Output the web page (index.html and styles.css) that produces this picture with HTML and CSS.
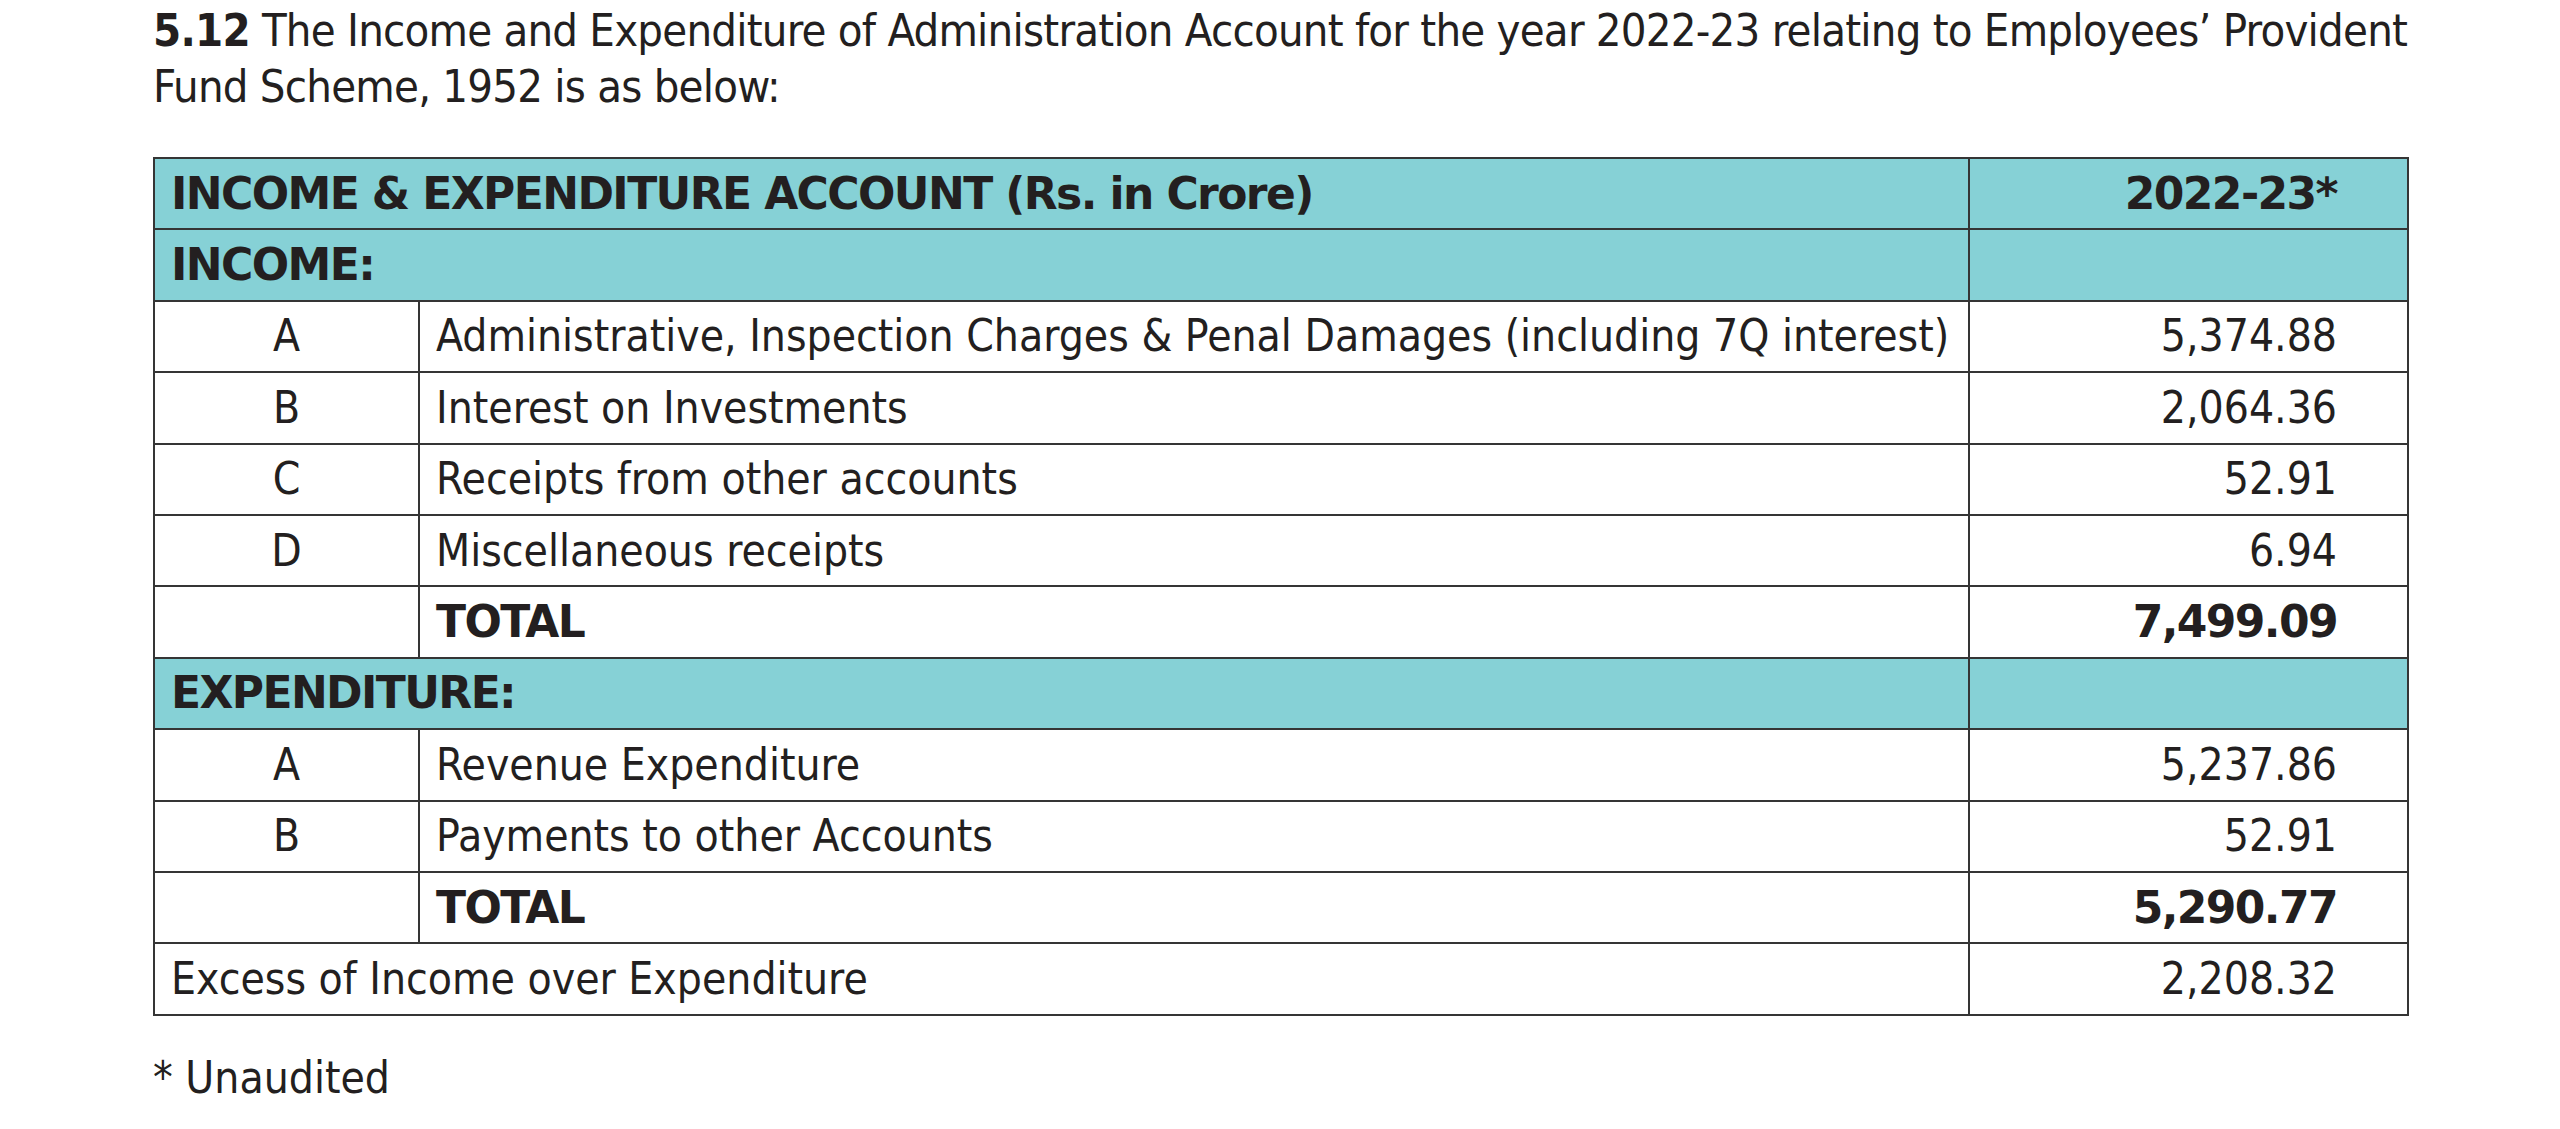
FILE: index.html
```html
<!DOCTYPE html>
<html lang="en">
<head>
<meta charset="utf-8">
<title>Income and Expenditure of Administration Account</title>
<link rel="stylesheet" href="styles.css">
</head>
<body>
<main class="page">
  <p class="intro"><span class="line"><b class="num">5.12</b> The Income and Expenditure of Administration Account for the year 2022-23 relating to Employees’ Provident</span><span class="line">Fund Scheme, 1952 is as below:</span></p>
  <table class="acct">
    <colgroup>
      <col class="c-letter">
      <col class="c-desc">
      <col class="c-amt">
    </colgroup>
    <tr class="head">
      <td colspan="2" class="bold">INCOME &amp; EXPENDITURE ACCOUNT (Rs. in Crore)</td>
      <td class="amt bold">2022-23*</td>
    </tr>
    <tr class="head">
      <td colspan="2" class="bold">INCOME:</td>
      <td></td>
    </tr>
    <tr>
      <td class="letter">A</td>
      <td>Administrative, Inspection Charges &amp; Penal Damages (including 7Q interest)</td>
      <td class="amt">5,374.88</td>
    </tr>
    <tr>
      <td class="letter">B</td>
      <td>Interest on Investments</td>
      <td class="amt">2,064.36</td>
    </tr>
    <tr>
      <td class="letter">C</td>
      <td>Receipts from other accounts</td>
      <td class="amt">52.91</td>
    </tr>
    <tr>
      <td class="letter">D</td>
      <td>Miscellaneous receipts</td>
      <td class="amt">6.94</td>
    </tr>
    <tr>
      <td class="letter"></td>
      <td class="bold">TOTAL</td>
      <td class="amt bold">7,499.09</td>
    </tr>
    <tr class="head">
      <td colspan="2" class="bold">EXPENDITURE:</td>
      <td></td>
    </tr>
    <tr>
      <td class="letter">A</td>
      <td>Revenue Expenditure</td>
      <td class="amt">5,237.86</td>
    </tr>
    <tr>
      <td class="letter">B</td>
      <td>Payments to other Accounts</td>
      <td class="amt">52.91</td>
    </tr>
    <tr>
      <td class="letter"></td>
      <td class="bold">TOTAL</td>
      <td class="amt bold">5,290.77</td>
    </tr>
    <tr>
      <td colspan="2">Excess of Income over Expenditure</td>
      <td class="amt">2,208.32</td>
    </tr>
  </table>
  <p class="note">* Unaudited</p>
</main>
</body>
</html>
```

FILE: styles.css
```css
html, body {
  margin: 0;
  padding: 0;
  background: #ffffff;
}

body {
  font-family: "DejaVu Sans Condensed", "DejaVu Sans", sans-serif;
  font-stretch: semi-condensed;
  color: #231f20;
}

.page {
  padding: 3px 0 0 153px;
  width: 2256px;
}

.intro {
  margin: 0;
  font-size: 45px;
  line-height: 56px;
  letter-spacing: -0.77px;
  white-space: nowrap;
}

.intro .line {
  display: block;
}

.intro .num {
  font-weight: bold;
}

.acct {
  margin-top: 42px;
  border-collapse: collapse;
  width: 2256px;
  table-layout: fixed;
  font-size: 44px;
  letter-spacing: 0;
  border: 2px solid #353535;
}

.c-letter { width: 265px; }
.c-desc { width: 1550px; }
.c-amt { width: 439px; }

.acct td {
  border: 2px solid #353535;
  height: 71.4px;
  padding: 0 16px;
  vertical-align: middle;
  white-space: nowrap;
  box-sizing: border-box;
  line-height: 1;
}

.acct tr.head td {
  background: #86d1d6;
}

.acct td.letter {
  text-align: center;
}

.acct td.amt {
  text-align: right;
  padding-right: 70px;
}

.acct .bold {
  font-weight: bold;
  font-stretch: normal;
  font-family: "DejaVu Sans", sans-serif;
  letter-spacing: -1.6px;
}

.note {
  margin: 34px 0 0 0;
  font-size: 44px;
  line-height: 56px;
}
```
